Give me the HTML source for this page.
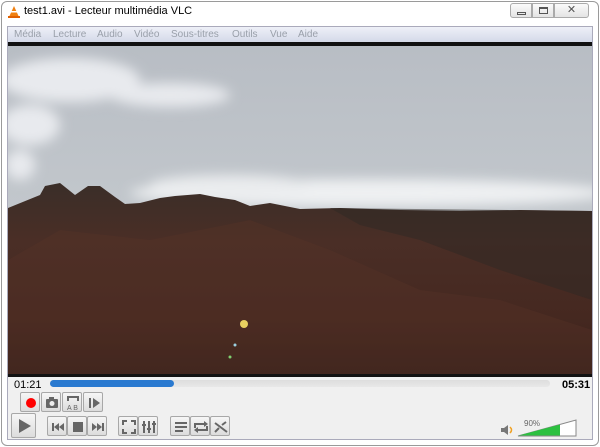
<!DOCTYPE html>
<html><head><meta charset="utf-8"><style>
*{margin:0;padding:0;box-sizing:border-box}
body{width:600px;height:447px;background:#fff;font-family:"Liberation Sans",sans-serif;position:relative;overflow:hidden}
.win{position:absolute;left:1px;top:1px;width:598px;height:445px;border:1px solid #9a9a9a;border-radius:6px;background:#fff}
.inner{position:absolute;left:7px;top:26px;width:586px;height:414px;border:1px solid #aab;background:#f0f0f0}
.t{position:absolute;font-size:11px;color:#000}
.menu{position:absolute;left:8px;top:27px;width:584px;height:15px;background:linear-gradient(#eef0f8,#d4d9e8);font-size:10px;color:#9aa0aa}
.menu span{position:absolute;top:2px}
.b{position:absolute;width:20px;height:20px;border:1px solid #a8a8a8;border-radius:2px;background:linear-gradient(#f6f6f6,#dcdcdc)}
.b svg{position:absolute;left:0;top:0}
.wb{position:absolute;top:3px;height:15px;border:1px solid #aaa;background:linear-gradient(#fafafa,#e4e4e4)}
</style></head><body>
<div class="win"></div>
<svg style="position:absolute;left:7px;top:5px" width="14" height="14"><polygon points="7,1 12,12 2,12" fill="#f08010"/><rect x="1" y="11" width="12" height="2" fill="#e06000"/><rect x="4" y="6" width="6" height="1.5" fill="#fff"/></svg>
<div class="t" style="left:24px;top:5px">test1.avi - Lecteur multimédia VLC</div>
<div class="wb" style="left:510px;width:22px;border-radius:3px 0 0 3px"><div style="position:absolute;left:6px;top:8px;width:9px;height:3px;border:1px solid #555"></div></div>
<div class="wb" style="left:532px;width:22px"><div style="position:absolute;left:6px;top:3px;width:9px;height:7px;border:1px solid #555;border-top-width:2px"></div></div>
<div class="wb" style="left:554px;width:35px;border-radius:0 3px 3px 0;font-size:11px;color:#555;text-align:center;line-height:13px">✕</div>
<div class="inner"></div>
<div class="menu"><span style="left:6px">Média</span><span style="left:45px">Lecture</span><span style="left:89px">Audio</span><span style="left:126px">Vidéo</span><span style="left:163px">Sous-titres</span><span style="left:224px">Outils</span><span style="left:262px">Vue</span><span style="left:290px">Aide</span></div>
<svg style="position:absolute;left:8px;top:42px" width="584" height="335" viewBox="8 42 584 335">
<defs>
<linearGradient id="sky" x1="0" y1="0" x2="0" y2="1"><stop offset="0" stop-color="#b8bdc4"/><stop offset="0.5" stop-color="#c2c7cc"/><stop offset="1" stop-color="#cfd3d7"/></linearGradient>
<linearGradient id="mt" x1="0" y1="0" x2="0" y2="1"><stop offset="0" stop-color="#3a2e28"/><stop offset="0.3" stop-color="#4a2e26"/><stop offset="0.7" stop-color="#452820"/><stop offset="1" stop-color="#36201a"/></linearGradient>
<filter id="bl"><feGaussianBlur stdDeviation="6"/></filter>
</defs>
<rect x="8" y="42" width="584" height="335" fill="url(#sky)"/>
<rect x="8" y="42" width="584" height="4" fill="#111"/>
<g filter="url(#bl)" fill="#e8eaee">
<ellipse cx="70" cy="80" rx="70" ry="22"/><ellipse cx="170" cy="95" rx="60" ry="12"/><ellipse cx="30" cy="125" rx="30" ry="20"/><ellipse cx="20" cy="165" rx="15" ry="15"/>
<ellipse cx="370" cy="193" rx="240" ry="14" fill="#eef0f2"/><ellipse cx="230" cy="185" rx="80" ry="10" fill="#eaecee"/>
</g>
<polygon fill="url(#mt)" points="8,208 40,195 45,186 60,183 75,195 88,186 100,186 115,197 125,204 140,203 160,198 175,196 200,194 215,197 235,200 250,206 270,203 285,206 300,209 340,208 400,210 460,211 520,210 592,211 592,376 8,376"/>
<polygon fill="#2e2824" opacity="0.5" points="330,208 592,211 592,300 500,270 420,240 360,225"/>
<polygon fill="#5a3428" opacity="0.35" points="60,230 150,240 250,220 330,250 420,290 500,300 592,330 592,376 8,376 8,260"/>
<circle cx="244" cy="324" r="4" fill="#e8d060"/><circle cx="235" cy="345" r="1.5" fill="#9cd0e0"/><circle cx="230" cy="357" r="1.5" fill="#80d070"/>
<rect x="8" y="374" width="584" height="3" fill="#111"/>
</svg>
<div class="t" style="left:14px;top:379px">01:21</div>
<div class="t" style="left:562px;top:379px;font-weight:bold">05:31</div>
<div style="position:absolute;left:50px;top:380px;width:500px;height:7px;border-radius:4px;background:linear-gradient(#ddd,#e8e8e8)"></div>
<div style="position:absolute;left:50px;top:380px;width:124px;height:7px;border-radius:4px;background:#2a7ad0"></div>
<div class="b" style="left:20px;top:392px"><svg width="20" height="20"><circle cx="10" cy="10" r="5" fill="#f00"/></svg></div>
<div class="b" style="left:41px;top:392px"><svg width="20" height="20"><rect x="4" y="6" width="12" height="9" rx="1" fill="#666"/><rect x="7" y="4" width="5" height="3" fill="#666"/><circle cx="10" cy="10.5" r="2.5" fill="#eee"/></svg></div>
<div class="b" style="left:62px;top:392px"><svg width="20" height="20"><path d="M5 8V4h10v4" stroke="#666" fill="none" stroke-width="2"/><text x="4" y="17" font-size="7" fill="#666" font-family="Liberation Sans">A B</text></svg></div>
<div class="b" style="left:83px;top:392px"><svg width="20" height="20"><rect x="5" y="5" width="2" height="10" fill="#666"/><polygon points="9,5 16,10 9,15" fill="#666"/></svg></div>
<div class="b" style="left:11px;top:413px;width:25px;height:25px"><svg width="25" height="25"><polygon points="7,5 19,12 7,19" fill="#666"/></svg></div>
<div class="b" style="left:47px;top:416px"><svg width="20" height="20"><rect x="4" y="6" width="2" height="8" fill="#666"/><polygon points="6,10 11,6 11,14" fill="#666"/><polygon points="11,10 16,6 16,14" fill="#666"/></svg></div>
<div class="b" style="left:67px;top:416px"><svg width="20" height="20"><rect x="5" y="5" width="10" height="10" fill="#666"/></svg></div>
<div class="b" style="left:87px;top:416px"><svg width="20" height="20"><polygon points="4,6 9,10 4,14" fill="#666"/><polygon points="9,6 14,10 9,14" fill="#666"/><rect x="14" y="6" width="2" height="8" fill="#666"/></svg></div>
<div class="b" style="left:118px;top:416px"><svg width="20" height="20"><path d="M4 8V4h4M12 4h4v4M16 12v4h-4M8 16H4v-4" stroke="#666" stroke-width="2" fill="none"/></svg></div>
<div class="b" style="left:138px;top:416px"><svg width="20" height="20"><path d="M5 4v12M10 4v12M15 4v12" stroke="#666" stroke-width="2"/><path d="M3 8h4M8 12h4M13 7h4" stroke="#666" stroke-width="2"/></svg></div>
<div class="b" style="left:170px;top:416px"><svg width="20" height="20"><path d="M4 6h12M4 10h12M4 14h8" stroke="#666" stroke-width="2"/></svg></div>
<div class="b" style="left:190px;top:416px"><svg width="20" height="20"><path d="M4 11V7h11M16 9v4H5" stroke="#666" stroke-width="2" fill="none"/><polygon points="13,4 17,7 13,10" fill="#666"/><polygon points="7,10 3,13 7,16" fill="#666"/></svg></div>
<div class="b" style="left:210px;top:416px"><svg width="20" height="20"><path d="M4 6l12 9M4 15l4-4M11 8l4-3" stroke="#666" stroke-width="2" fill="none"/></svg></div>
<svg style="position:absolute;left:500px;top:424px" width="14" height="12"><polygon points="1,4 4,4 8,1 8,11 4,8 1,8" fill="#777"/><path d="M10 3q3 3 0 6" stroke="#f0a020" stroke-width="1.5" fill="none"/></svg>
<svg style="position:absolute;left:517px;top:419px" width="60" height="19"><polygon points="1,17 59,1 59,17" fill="#fff" stroke="#888"/><polygon points="1.5,16.5 43,5.5 43,16.5" fill="#2cc040"/></svg>
<div class="t" style="left:524px;top:419px;font-size:8px;color:#666">90%</div>
</body></html>
